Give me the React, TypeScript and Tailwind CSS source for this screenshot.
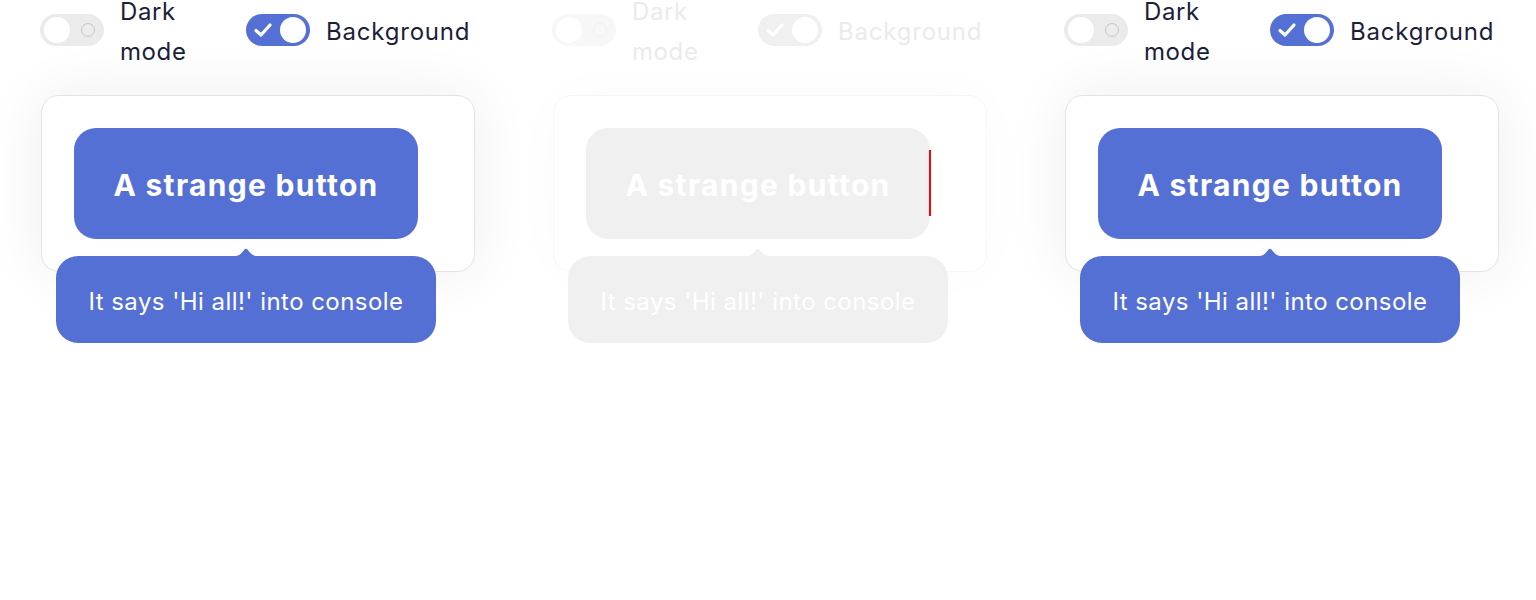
import React from "react";

const FONT = { fontFamily: "Inter, 'Noto Sans', sans-serif" };

function Switch({ on, ghost }: { on: boolean; ghost?: boolean }) {
  if (on) {
    return (
      <div
        className={`flex h-[32px] w-[64px] shrink-0 items-center justify-between rounded-full pl-[7px] pr-[4px] ${
          ghost ? "bg-[#f0f0f0]" : "bg-[#5470d4]"
        }`}
      >
        <svg width="20" height="16" viewBox="0 0 20 16">
          <path d="M3 8.5 L8 13 L17 3" fill="none" stroke="white" strokeWidth="3.2" strokeLinecap="round" strokeLinejoin="round" />
        </svg>
        <div className="h-[26px] w-[26px] rounded-full bg-white" />
      </div>
    );
  }
  return (
    <div
      className={`flex h-[32px] w-[64px] shrink-0 items-center justify-between rounded-full pl-[4px] pr-[9px] ${
        ghost ? "bg-[#f7f7f7]" : "bg-[#ebebeb]"
      }`}
    >
      <div className="h-[26px] w-[26px] rounded-full bg-white" />
      <div
        className={`h-[14px] w-[14px] rounded-full border-[1.5px] ${
          ghost ? "border-[#f0f0f0]" : "border-[#c8c8c8]"
        }`}
      />
    </div>
  );
}

function Column({ ghost }: { ghost?: boolean }) {
  const text = ghost ? "text-[#ebebeb]" : "text-[#1c1e3a]";
  const fill = ghost ? "bg-[#f0f0f0]" : "bg-[#5470d4]";
  return (
    <div className="flex flex-col gap-[35px] pl-[40px]">
      <div className="flex h-[60px] items-center">
        <div className="flex w-[206px] items-center gap-[16px]">
          <Switch on={false} ghost={ghost} />
          <div className={`w-[90px] pt-[4px] text-[24px] leading-[40px] tracking-[0.6px] ${text}`}>Dark mode</div>
        </div>
        <div className="flex items-center gap-[16px]">
          <Switch on={true} ghost={ghost} />
          <div className={`pt-[4px] text-[24px] leading-[40px] tracking-[0.8px] ${text}`}>Background</div>
        </div>
      </div>
      <div className="pl-[1px]">
        <div
          className={`w-[434px] rounded-[18px] border p-[32px] ${
            ghost
              ? "border-[#f7f7f7] shadow-[0_0_60px_rgba(0,0,0,0.02)]"
              : "border-[#e3e3e3] bg-white shadow-[0_0_60px_rgba(0,0,0,0.07)]"
          }`}
        >
          <div className="relative w-[344px]">
            <button
              className={`flex h-[111px] w-[344px] items-center justify-center rounded-[22px] pt-[4px] text-[30px] font-bold tracking-[1.3px] text-white ${fill}`}
            >
              A strange button
            </button>
            {ghost && (
              <div className="absolute right-[-1px] top-[22px] h-[66px] w-[2px] bg-[#ff0000]" />
            )}
            <div className="absolute left-1/2 top-[119px] z-10 flex -translate-x-1/2 flex-col items-center">
              <svg width="24" height="9" viewBox="0 0 24 9" className="block">
                <path
                  d="M0 9 C4 9 6 8 8 5.5 L10.5 2.5 C11.3 1.5 12.7 1.5 13.5 2.5 L16 5.5 C18 8 20 9 24 9 Z"
                  fill={ghost ? "#f0f0f0" : "#5470d4"}
                />
              </svg>
              <div
                className={`flex h-[87px] w-[380px] items-center justify-center rounded-[22px] pt-[4px] text-[24px] tracking-[0.45px] text-white ${fill}`}
              >
                It says 'Hi all!' into console
              </div>
            </div>
          </div>
        </div>
      </div>
    </div>
  );
}

export default function App() {
  return (
    <div className="h-[600px] w-[1536px] overflow-hidden bg-white" style={FONT}>
      <div className="grid grid-cols-[512px_512px_512px]">
        <Column />
        <Column ghost />
        <Column />
      </div>
    </div>
  );
}
